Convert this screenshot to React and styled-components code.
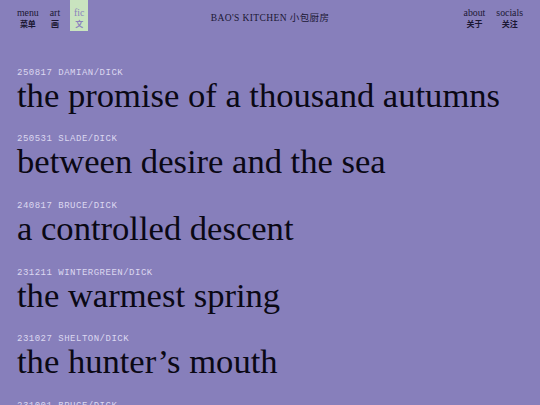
import React from "react";
import styled, { createGlobalStyle } from "styled-components";

const Global = createGlobalStyle`
  html, body {
    margin: 0;
    padding: 0;
    background: #877fbb;
  }
`;

const Page = styled.div`
  width: 540px;
  height: 405px;
  background: #877fbb;
  overflow: hidden;
`;

const Header = styled.header`
  display: grid;
  grid-template-columns: 1fr auto 1fr;
  align-items: start;
  height: 32px;
  padding: 0 13px;
`;

const Nav = styled.nav`
  display: flex;
  gap: 3px;
  justify-self: ${({ right }) => (right ? "end" : "start")};
`;

const NavItem = styled.a`
  display: flex;
  flex-direction: column;
  align-items: center;
  height: 31px;
  padding: 7px 4px 0;
  margin-left: ${({ shift }) => shift || "0"};
  box-sizing: border-box;
  font-family: "Liberation Serif", "Noto Sans CJK SC", serif;
  font-size: 9.8px;
  line-height: 11px;
  color: ${({ active }) => (active ? "#8a82bd" : "#1b1733")};
  background: ${({ active }) => (active ? "#c9e4bf" : "transparent")};
  text-decoration: none;
`;

const Zh = styled.span`
  font-family: "Noto Sans CJK SC", serif;
  font-size: 8px;
  font-weight: bold;
`;

const Brand = styled.div`
  padding-top: 10px;
  font-family: "Liberation Serif", "Noto Sans CJK SC", serif;
  font-size: 9.5px;
  letter-spacing: 0.4px;
  color: #1b1733;
`;

const List = styled.main`
  padding: 35.6px 17px 0;
`;

const Entry = styled.article`
  margin-bottom: 21.3px;
`;

const Label = styled.div`
  font-family: "Liberation Mono", "DejaVu Sans Mono", monospace;
  font-size: 9px;
  letter-spacing: 0.5px;
  line-height: 10px;
  color: #dcd8f0;
  text-transform: uppercase;
`;

const Title = styled.h2`
  margin: 0;
  font-family: "Liberation Serif", serif;
  font-weight: normal;
  font-size: 34.6px;
  line-height: 35.4px;
  color: #0a0814;
  white-space: nowrap;
`;

const stories = [
  ["250817 damian/dick", "the promise of a thousand autumns"],
  ["250531 slade/dick", "between desire and the sea"],
  ["240817 bruce/dick", "a controlled descent"],
  ["231211 wintergreen/dick", "the warmest spring"],
  ["231027 shelton/dick", "the hunter\u2019s mouth"],
  ["231001 bruce/dick", "the long way home"],
];

export default function App() {
  return (
    <Page>
      <Global />
      <Header>
        <Nav>
          <NavItem>menu<Zh>菜单</Zh></NavItem>
          <NavItem>art<Zh>画</Zh></NavItem>
          <NavItem active shift="3px">fic<Zh>文</Zh></NavItem>
        </Nav>
        <Brand>BAO'S KITCHEN 小包厨房</Brand>
        <Nav right>
          <NavItem>about<Zh>关于</Zh></NavItem>
          <NavItem>socials<Zh>关注</Zh></NavItem>
        </Nav>
      </Header>
      <List>
        {stories.map(([label, title]) => (
          <Entry key={label}>
            <Label>{label}</Label>
            <Title>{title}</Title>
          </Entry>
        ))}
      </List>
    </Page>
  );
}
